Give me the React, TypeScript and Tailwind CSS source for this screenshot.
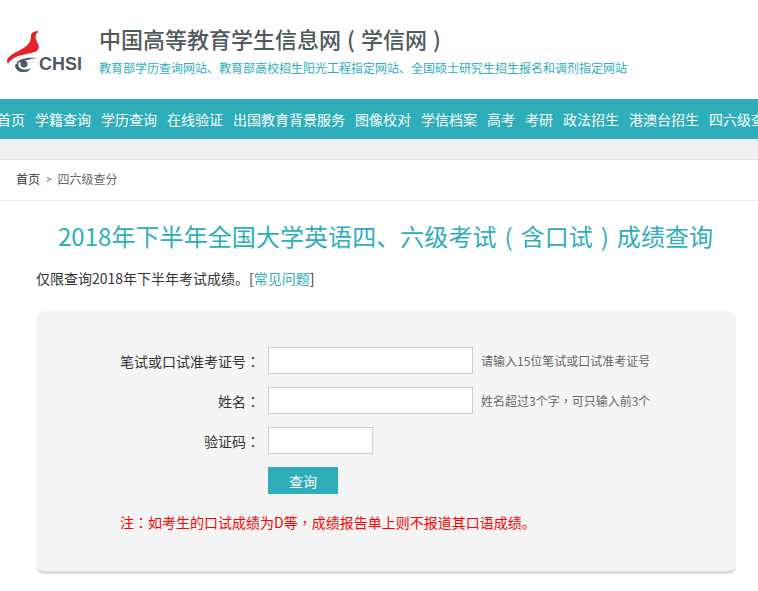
import React from "react";

const cjk = "font-['Noto_Sans_CJK_SC','Liberation_Sans',sans-serif]";

const navItems = [
  "首页", "学籍查询", "学历查询", "在线验证", "出国教育背景服务", "图像校对",
  "学信档案", "高考", "考研", "政法招生", "港澳台招生", "四六级查分",
];

// centred full-width punctuation, as in the original page font
function P({ children }: { children: string }) {
  return <span className="font-['Noto_Sans_CJK_TC',sans-serif]">{children}</span>;
}

// bracket sitting in the middle of a full-width box
function Paren({ children, narrow }: { children: string; narrow?: boolean }) {
  return <span className={`inline-block text-center ${narrow ? "w-[20px]" : "w-[1em]"}`}>{children}</span>;
}

function Logo() {
  return (
    <div className="flex items-end w-[75px] h-[42px] shrink-0">
      <svg width="32" height="42" viewBox="0 0 32 42" className="shrink-0">
        {/* flame */}
        <path d="M1 28C6 22 17 20 22 13C25 9 23 5 25 3C27 1 30 1 32 1.5C29 3 28 6 29 10C32 15 33 18 30 21C22 25 6 24 1 34C-.5 32 0 30 1 28Z" fill="#e2232b" />
        {/* swirl */}
        <path d="M9 33C13 28 22 27 30 28C23 29 18 30 15 32C13 32 11 33 9 33Z" fill="#4f5a5f" />
        <path d="M8 35C8 40 13 43 18 42C21 42 23 40 24 38C21 40 16 40 13 38C11 36 11 34 12 32Z" fill="#4f5a5f" />
        <circle cx="17" cy="34" r="3.5" fill="#4f5a5f" />
      </svg>
      <span className="font-['Liberation_Sans',sans-serif] font-bold text-lg leading-[15px] text-[#4f5a5f]">CHSI</span>
    </div>
  );
}

function Row({ label, hint, inputWidth }: { label: string; hint?: React.ReactNode; inputWidth: string }) {
  return (
    <div className="flex items-center h-[27px] mb-[13px]">
      <label className="w-[224px] shrink-0 text-right text-sm text-[#333]">
        {label}
        <P>：</P>
      </label>
      <input className={`${inputWidth} h-[27px] ml-2 bg-white border border-[#ccc]`} />
      {hint && <span className="ml-2 text-xs text-[#666]">{hint}</span>}
    </div>
  );
}

export default function App() {
  return (
    <div className={`w-[758px] h-[591px] overflow-hidden bg-white ${cjk}`}>
      <header className="h-[99px] flex items-start pl-[7px] pt-[30px]">
        <Logo />
        <div className="ml-[17px] -mt-[8px]">
          <h1 className="text-[22px] leading-[32px] font-medium text-[#50595c] whitespace-nowrap">
            中国高等教育学生信息网<Paren narrow>(</Paren>学信网<Paren narrow>)</Paren>
          </h1>
          <p className="text-xs leading-[18px] mt-[5px] text-[#2eaebb] whitespace-nowrap">教育部学历查询网站、教育部高校招生阳光工程指定网站、全国硕士研究生招生报名和调剂指定网站</p>
        </div>
      </header>

      <nav className="h-10 bg-[#2eaebb] flex items-center -ml-2 overflow-hidden">
        {navItems.map((item) => (
          <a key={item} className="px-[5px] text-sm leading-10 text-white whitespace-nowrap shrink-0">{item}</a>
        ))}
      </nav>
      <div className="h-[21px] bg-[#f0f0f0] border-b border-[#e4e4e4]" />

      <div className="h-[41px] border-b border-[#e8e8e8] flex items-center pl-4 pb-[2px] text-xs text-[#333]">
        <span>首页</span>
        <span className="mx-[6px] text-[#666] text-[10px]">&gt;</span>
        <span className="text-[#666]">四六级查分</span>
      </div>

      <h2 className="mt-[18px] pl-[13px] text-center text-2xl leading-[34px] tracking-[0.07px] text-[#2eaebb] whitespace-nowrap">
        2018年下半年全国大学英语四、六级考试<Paren>(</Paren>含口试<Paren>)</Paren>成绩查询
      </h2>

      <p className="mt-[15px] ml-9 text-sm leading-5 text-[#333]">
        仅限查询2018年下半年考试成绩。[<a className="text-[#2eaebb]">常见问题</a>]
      </p>

      <section className="mt-[23px] mx-9 w-[700px] h-[263px] bg-[#f5f5f5] rounded-lg border-b-[3px] border-[#ddd] pt-9">
        <Row label="笔试或口试准考证号" hint="请输入15位笔试或口试准考证号" inputWidth="w-[205px]" />
        <Row label="姓名" hint={<>姓名超过3个字<P>，</P>可只输入前3个</>} inputWidth="w-[205px]" />
        <Row label="验证码" inputWidth="w-[105px]" />
        <button className="block ml-[232px] w-[70px] h-[27px] bg-[#2eaebb] text-white text-sm">查询</button>
        <p className="mt-[18px] ml-[84px] text-sm leading-5 text-[#f00]">
          注<P>：</P>如考生的口试成绩为D等<P>，</P>成绩报告单上则不报道其口语成绩。
        </p>
      </section>
    </div>
  );
}
